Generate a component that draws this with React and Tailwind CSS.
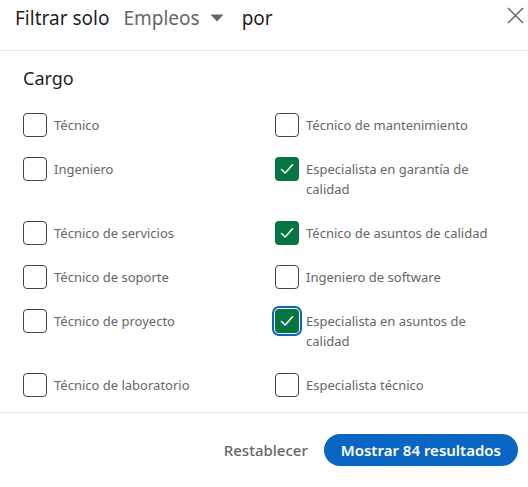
import React from "react";

const options = [
  { label: "Técnico", checked: false },
  { label: "Técnico de mantenimiento", checked: false },
  { label: "Ingeniero", checked: false },
  { label: "Especialista en garantía de calidad", checked: true },
  { label: "Técnico de servicios", checked: false },
  { label: "Técnico de asuntos de calidad", checked: true },
  { label: "Técnico de soporte", checked: false },
  { label: "Ingeniero de software", checked: false },
  { label: "Técnico de proyecto", checked: false },
  { label: "Especialista en asuntos de calidad", checked: true, focused: true },
  { label: "Técnico de laboratorio", checked: false },
  { label: "Especialista técnico", checked: false },
];

function Checkbox({ checked, focused }) {
  const base = "flex h-6 w-6 shrink-0 items-center justify-center rounded-[4px]";
  const look = checked ? "bg-[#057642]" : "border border-[#444] bg-white";
  const ring = focused ? "outline-2 outline-offset-1 outline-[#0a66c2]" : "";
  return (
    <span className={`${base} ${look} ${ring}`}>
      {checked ? (
        <svg width="16" height="16" viewBox="0 0 16 16" fill="none">
          <path d="M2.5 8.5 L6.2 12 L13.5 3.8" stroke="white" strokeWidth="1.6" strokeLinecap="round" strokeLinejoin="round" />
        </svg>
      ) : null}
    </span>
  );
}

function Option({ label, checked, focused }) {
  return (
    <label className="flex items-start gap-[7px]">
      <Checkbox checked={checked} focused={focused} />
      <span className="py-[2px] text-[13px] leading-5 text-[#666]">{label}</span>
    </label>
  );
}

export default function App() {
  return (
    <div className="flex h-[487px] w-[528px] flex-col bg-white font-['Noto_Sans','Open_Sans',sans-serif] text-[rgba(0,0,0,0.9)]">
      <header className="flex h-[51px] shrink-0 items-start border-b border-[#e8e8e8] pl-[15px] pr-[4px] pt-[4px]">
        <div className="flex items-center text-[19px] leading-7">
          <span>Filtrar solo</span>
          <span className="ml-[14px] flex items-center gap-[10px] text-[#666]">
            Empleos
            <svg width="14" height="8" viewBox="0 0 14 8">
              <path d="M0.5 0.5 L13.5 0.5 L7 7.5 Z" fill="#666" />
            </svg>
          </span>
          <span className="ml-[18px]">por</span>
        </div>
        <button type="button" className="ml-auto mt-[1px] text-[#666]">
          <svg width="20" height="20" viewBox="0 0 20 20" fill="none">
            <path d="M4 3 L19 18 M19 3 L4 18" stroke="#666" strokeWidth="1.5" />
          </svg>
        </button>
      </header>

      <section className="flex-1 border-b border-[#e8e8e8] pl-[23px] pr-6 pt-[13px]">
        <h2 className="text-[18px] leading-7">Cargo</h2>
        <div className="mt-[21px] grid grid-cols-[252px_1fr] gap-y-5">
          {options.map((o) => (
            <Option key={o.label} {...o} />
          ))}
        </div>
      </section>

      <footer className="flex h-[74px] shrink-0 items-center justify-end pr-[10px]">
        <button type="button" className="text-[15px] font-medium text-[#666]">
          Restablecer
        </button>
        <button
          type="button"
          className="ml-[16px] h-8 rounded-full bg-[#0a66c2] px-[17px] text-[15px] font-semibold text-white"
        >
          Mostrar 84 resultados
        </button>
      </footer>
    </div>
  );
}
